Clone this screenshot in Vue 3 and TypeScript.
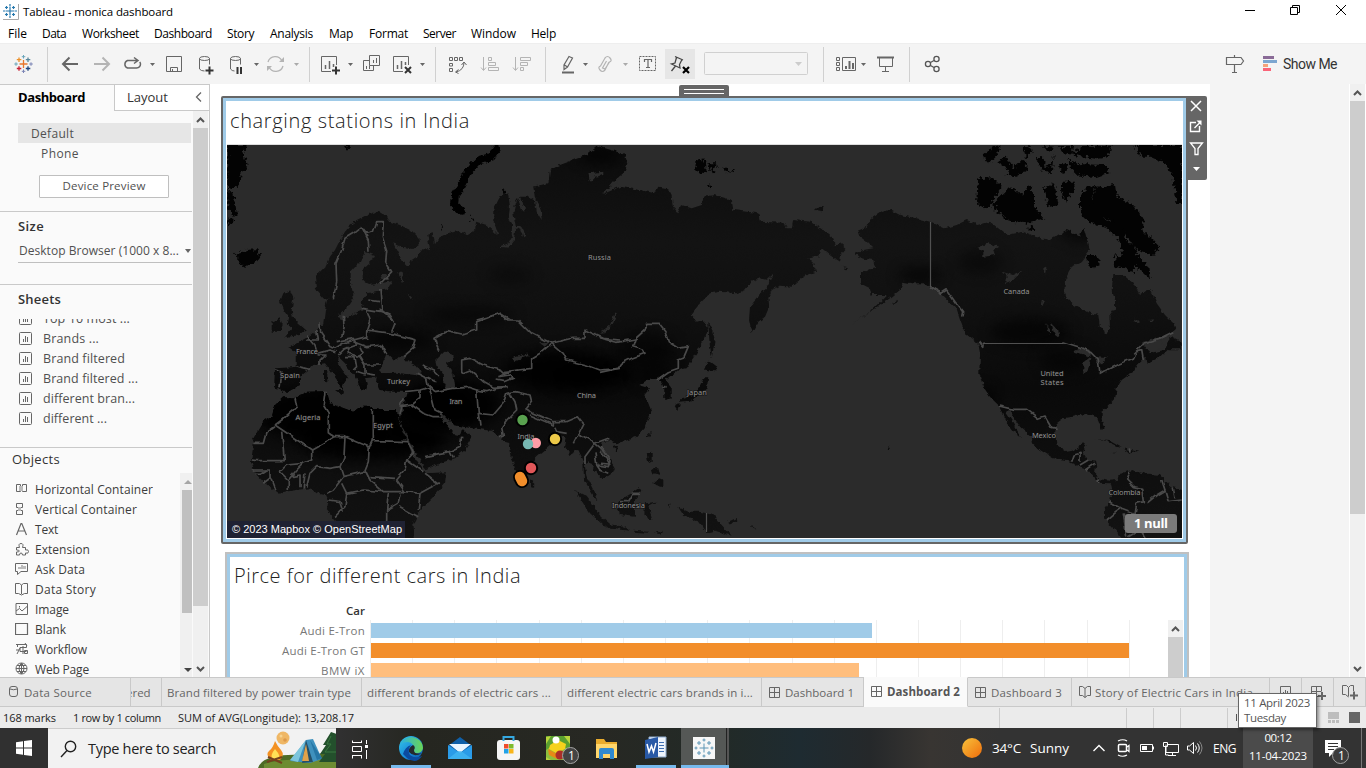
<script setup lang="ts">
import type { Directive } from 'vue'

// Tracks a label out (or in) so that it takes the given width.
const vFit: Directive<HTMLElement, number> = {
  mounted(el, { value }) {
    const width = el.getBoundingClientRect().width
    const count = (el.textContent ?? '').length
    if (count) el.style.letterSpacing = `${((value - width) / count).toFixed(3)}px`
  },
}

const menu: [string, number][] = [['File', 19], ['Data', 24], ['Worksheet', 57], ['Dashboard', 58], ['Story', 27], ['Analysis', 43], ['Map', 24], ['Format', 39], ['Server', 33], ['Window', 45], ['Help', 25]]
const sheets: [string, number][] = [['Top 10 most ...', 87], ['Brands ...', 56], ['Brand filtered', 82], ['Brand filtered ...', 95], ['different bran...', 92], ['different ...', 64]]
const objects: [string, number][] = [['Horizontal Container', 118], ['Vertical Container', 102], ['Text', 23], ['Extension', 55], ['Ask Data', 50], ['Data Story', 61], ['Image', 34], ['Blank', 31], ['Workflow', 52], ['Web Page', 54]]
const bars = [
  { car: 'Audi E-Tron', tw: 65, w: 501, color: '#a0cbe8' },
  { car: 'Audi E-Tron GT', tw: 83, w: 758, color: '#f28e2b' },
  { car: 'BMW iX', tw: 44, w: 488, color: '#ffbe7d' },
]
const gridLines = Array.from({ length: 19 }, (_, i) => Math.round(i * 42.15) + 0.5)

const project = (ox: number, oy: number) => (s: string) =>
  s.trim().split(/\s+/).map((p) => {
    const [x, y] = p.split(',').map(Number)
    return `${(ox + x / 3).toFixed(1)},${(oy + y / 3).toFixed(1)}`
  }).join(' ')
const nw = project(220, 80)
const sw = project(220, 310)
const pa = project(600, 140)
const am = project(850, 140)

const eurasia = [
  nw('330,655 315,660 288,630 285,590 315,560 330,530 345,510 365,470 385,440 410,420 440,405 470,395 500,405 510,425 540,435 570,450 595,475 597,495 580,507 545,500 520,490 530,510 545,540 560,555 570,555 575,540 590,530 610,505 630,510 622,465 638,460 645,490 655,475 680,460 720,452 740,465 765,450 768,425 800,435 835,465 820,420 820,390 835,360 848,338 865,345 870,380 866,410 876,435 875,470 865,490 840,500 865,503 882,480 885,450 900,445 910,475 916,470 910,445 900,438 887,438 880,400 885,370 895,355 905,388 915,388 900,350 925,350 945,362 950,395 965,420 962,390 945,355 940,320 985,310 990,270 1020,255 1060,240 1100,225 1130,200'),
  pa('0,20 50,35 75,45 82,70 75,95 40,125 10,162 60,140 120,150 165,160 175,140 205,145 215,165 218,200 232,220 245,195 275,205 305,195 310,170 345,165 395,180 400,210 440,215 475,220 480,245 550,248 560,265 575,265 580,240 630,245 670,270 700,295 705,320 720,310 738,325 720,345 718,362 690,345 665,325 655,350 625,355 640,370 648,395 610,410 575,440 540,437 515,450 505,475 508,500 495,530 475,545 455,580 447,540 450,500 475,470 500,440 523,400 500,420 480,415 455,425 435,450 410,460 360,455 330,460 300,490 272,525 290,545 310,540 325,565 310,600 290,640 260,685 235,690 215,705 195,720 215,745 215,775 193,780 193,745 180,720 150,715 118,735 150,745 133,765 145,790 155,815 135,860 110,890 70,905 50,910 25,900 5,905 0,935 30,960 43,980 35,1000 10,1018'),
  sw('1140,500 1125,480 1105,450 1095,470 1100,500 1115,530 1135,570 1125,565 1105,530 1092,510 1090,450 1075,420 1050,435 1035,410 1040,385 1020,375 1000,400 985,412 950,440 925,465 925,490 905,525 890,495 875,440 868,400 850,395 835,375 815,362 780,358 730,350 700,345 665,310 655,305 672,335 700,372 720,375 726,355 755,385 735,420 705,445 660,460 620,478 605,460 580,415 550,355 537,325 548,300 555,262 560,245 520,245 480,240 468,215 470,200 435,205 440,225 435,240 420,235 410,205 395,185 375,160 355,140 350,155 385,205 375,215 365,240 355,215 330,180 315,160 280,165 265,180 240,200 240,225 205,245 185,245 180,235 162,235 165,175 215,172 230,170 230,130 205,110 230,100 265,80 290,60 310,40 315,0 322,-30'),
].join(' ')
const africa = sw('155,320 165,285 190,262 225,262 260,245 320,243 330,280 360,290 400,305 420,290 445,290 480,300 530,300 535,325 550,365 562,395 575,430 600,465 615,490 680,487 675,520 640,560 600,600 580,640 585,690 360,690 355,640 340,625 320,600 325,575 315,555 290,550 270,535 230,540 175,548 135,520 105,490 93,455 98,420 97,390 130,335')
const america = am('25,270 50,260 65,235 95,215 120,210 150,225 200,235 240,245 285,265 320,255 350,240 385,255 420,245 445,265 470,285 520,275 555,290 600,300 620,285 650,270 690,290 700,260 720,330 690,370 665,380 645,420 643,465 670,495 710,515 745,525 750,565 770,580 780,555 778,530 795,505 795,480 785,450 790,405 820,405 850,430 870,465 900,445 920,490 945,525 970,550 978,570 940,590 900,600 870,620 905,607 900,640 945,630 960,590 995,608 995,628 955,628 935,648 890,672 885,650 860,675 850,695 815,720 800,745 795,775 770,800 755,815 755,835 766,860 755,870 740,830 700,822 670,830 640,835 620,850 615,880 620,915 650,935 680,930 690,912 708,910 700,935 715,962 740,965 735,1000 745,1018 780,1022 800,1020 815,1000 845,990 880,1000 930,1005 960,1040 1000,1050 1000,1200 820,1200 790,1165 762,1135 762,1110 780,1085 785,1050 780,1030 745,1028 725,1005 705,985 665,970 650,960 610,955 570,930 550,915 545,890 510,860 490,830 475,810 470,820 490,850 512,890 500,885 475,855 460,825 445,795 420,770 400,740 388,700 390,640 385,612 345,580 330,540 320,510 290,480 270,460 240,440 215,430 185,430 160,425 150,450 120,475 80,503 5,552 60,515 95,480 110,465 65,465 60,445 30,430 30,400 50,390 75,385 70,360 30,355 15,340 40,330 70,325 50,305 30,290')

const islands = [
  sw('190,0 180,-25 190,-50 210,-60 220,-35 215,0 218,20 235,40 258,60 240,75 195,82 215,55 200,40 205,20'),
  sw('155,35 180,25 188,45 180,65 155,65'),
  sw('930,508 943,518 942,533 930,530'),
  sw('1065,540 1100,560 1145,620 1180,650 1155,650 1110,610'),
  sw('312,180 322,180 322,218 312,210'),
  sw('345,240 370,240 365,255'),
  pa('312,692 325,660 352,680 335,695'),
  pa('310,715 325,715 320,745 270,785 240,788 245,775 280,765 300,740'),
  pa('222,795 240,790 232,810'),
  pa('325,545 333,560 345,600 335,655 328,600'),
  pa('140,890 152,875 148,895'), pa('140,940 155,935 155,965 145,970'),
  pa('160,1028 178,1015 190,1020 190,1042 165,1035'), pa('155,985 175,985 180,1005 160,1000'),
  pa('50,1095 60,1080 95,1060 115,1045 125,1050 105,1080 105,1130 60,1125'),
  pa('135,1090 172,1085 145,1100 158,1140 145,1140 133,1120'),
  pa('235,1102 265,1115 300,1115 340,1125 365,1155 395,1187 345,1172 320,1178 290,1140 250,1125'),
  pa('15,1150 70,1160 90,1172 20,1165'), pa('100,1172 145,1175 140,1181 100,1178'),
  pa('40,920 55,918 50,935'), pa('385,1145 410,1133 412,1142 390,1151'), pa('165,1178 190,1172 180,1182'), pa('205,1095 212,1090 208,1105'), pa('450,1155 470,1168 462,1168'),
  pa('862,918 870,925 864,930'), pa('645,210 655,200 675,202 665,214'), pa('725,380 745,385 740,388'),
  am('735,897 780,900 815,920 800,918 760,900'), am('820,925 865,935 840,940'),
  am('125,490 142,482 135,492'), am('785,938 800,938 795,941'),
]
const arctic = [
  nw('22,195 80,195 70,220 85,265 65,275 62,310 45,320 22,330'),
  nw('22,330 40,340 50,400 40,410 22,380'), nw('22,415 45,420 22,440'),
  nw('38,512 55,525 75,510 110,508 123,525 105,550 75,560 55,548 55,530'),
  nw('372,195 390,195 385,215'), nw('845,325 858,328 850,338'), nw('748,405 765,425 755,425'), nw('660,435 672,440 665,450'),
  pa('285,60 310,55 318,75 320,100 290,95'), pa('322,70 348,70 350,85 335,97'), pa('365,82 400,95 380,100'), pa('318,135 338,138 330,148'),
  am('385,115 430,112 458,140 435,170 425,195 405,208 378,185'),
  am('430,190 470,150 490,140 505,160 520,160 535,135 552,160 552,200 580,235 530,250 480,245 440,215'),
  am('400,50 420,25 455,17 440,45 415,70'), am('445,65 470,50 490,85 510,65 520,55 535,90 500,110 470,105 475,90'),
  am('520,25 530,60 545,30 535,18'), am('560,55 580,50 590,85 612,60 612,40 605,100 575,90'), am('575,18 615,20 600,35'),
  am('625,18 670,18 665,40 700,18 785,17 775,50 740,58 690,48 640,40'),
  am('655,55 680,72 770,75 775,100 740,112 680,105 660,85'),
  am('580,145 615,130 620,170 625,195 600,200 590,180'), am('635,125 675,125 670,155 645,185 637,165'),
  am('627,75 650,70 650,95 635,102'),
  am('690,165 715,140 735,138 725,180 735,200 760,215 760,235 780,245 800,235 820,260 825,290 835,310 850,310 860,340 885,370 895,380 900,420 880,400 855,375 850,400 820,385 790,380 800,360 790,345 815,350 815,320 800,290 770,265 735,255 700,235 690,205'),
  am('735,145 795,135 800,170 850,195 880,235 880,270 928,320 910,348 890,340 860,330 840,300 800,250 765,235 725,190'),
  am('855,15 997,15 997,195 980,195 970,110 945,70 900,50 870,50'),
  am('710,345 735,345 755,365 730,385 715,370'), am('545,255 555,270 530,268'),
]
const lakes = [
  nw('435,515 462,525 450,550 425,570 430,600 450,615 490,608 520,603 500,628 440,640 425,665 430,690 395,705 370,718 352,710 385,680 402,655 392,610 392,575 420,545'),
  nw('478,600 490,580 500,590 505,600'), nw('535,575 545,580 552,605 545,608'), nw('562,640 578,655 572,658'),
  sw('480,190 485,165 500,130 515,145 530,150 540,140 558,133 555,150 590,168 605,190 585,195 530,188'),
  sw('645,150 670,125 695,130 700,150 678,160 700,190 706,235 680,238 670,215 668,190 650,170'),
  sw('875,145 925,130 925,135 885,150'), sw('960,100 985,98 975,110'),
  nw('1105,280 1150,275 1150,285 1125,290 1110,305'), nw('1150,340 1195,300 1200,300 1160,330'),
  pa('45,515 50,520 40,550 15,577 0,578 30,555'),
  am('380,325 415,310 445,320 430,330 435,345 400,350 400,335'), am('455,395 490,405 517,393 490,420 465,430 470,410'),
  am('575,385 590,380 585,402'), am('575,480 582,485 572,505'), am('585,550 600,565 600,585'), am('602,545 625,570 628,592 612,580'),
  am('670,635 700,620 725,635 720,650 690,640'), am('700,670 725,650 712,695 700,700'), am('735,650 770,655 755,675 740,665'), am('745,698 780,685 770,692 750,703'),
  am('850,535 870,545 860,550'), am('895,540 910,538 905,545'), am('875,605 930,600 945,620 900,640'),
]

const borders = [
  nw('340,655 350,605 348,550 365,510 375,475 400,460 425,440 440,460 460,455 470,425 490,425 487,470 500,510 497,545 515,575 480,612'),
  nw('425,440 445,480 447,515'), nw('480,630 485,690 520,722'), nw('445,660 478,665'), nw('425,685 485,695'),
  nw('770,720 800,712 840,700 870,718'),
  sw('300,40 302,70 330,110 345,115 370,100 400,90 440,80'), sw('370,20 372,50 365,80'), sw('440,0 450,30 440,60 440,90'), sw('440,60 500,68 550,80 588,90 580,115 550,140'), sw('475,0 510,15 525,40 515,65'),
  sw('290,60 295,90 260,90'), sw('260,75 285,105 295,135 315,135 300,150 300,165'), sw('295,130 330,120 350,125'), sw('350,95 400,85 410,105 370,120 355,135'), sw('400,95 440,110 485,105 500,130'), sw('380,110 385,130 420,140 435,165 480,165'), sw('375,140 405,140 410,170 400,180'), sw('435,165 435,190 465,195'), sw('405,185 435,195'), sw('420,110 430,130 415,140'), sw('485,105 495,130'),
  sw('165,180 185,185 180,235'), sw('230,168 268,178'),
  sw('650,105 645,85 680,65 725,75 770,60 770,35 800,25 840,10 860,30 895,30 935,70 975,90 995,100 960,130 935,145 935,175 895,180 850,185 840,200'), sw('650,105 660,125'),
  sw('995,100 1030,130 1040,150 1100,165 1140,180 1200,175'), sw('995,100 1055,85 1095,85 1095,60 1150,85 1200,90'),
  sw('725,190 725,150 750,145 790,165 840,180 850,190 895,180'), sw('725,190 750,180 790,215 820,232 860,230'), sw('830,210 855,215 880,205 870,195 835,200'),
  sw('605,165 640,180 660,200'), sw('590,190 620,205 625,225 645,245'), sw('620,200 650,215'),
  sw('555,245 600,240 628,232 645,300 665,310'), sw('645,245 700,235 745,232 770,240 775,310 780,350'), sw('770,240 800,245 830,235 860,232'), sw('775,310 820,315 850,280 860,250 885,245 930,255 935,275 920,295'), sw('870,250 885,275 890,300 860,330 845,350 850,375 838,380'),
  sw('920,295 940,310 1000,335 1040,335 1075,320 1090,340 1075,370 1100,385 1125,400 1165,385'), sw('930,315 1000,345 1000,335'), sw('1005,350 1010,365 1040,370'), sw('1075,370 1060,400'), sw('1125,400 1110,420 1095,440 1095,460'), sw('1125,400 1150,420 1170,450 1165,470 1130,465 1125,430'), sw('1130,465 1140,480 1165,490'),
  sw('540,310 545,290 575,285 600,265 600,240'), sw('575,285 610,310 640,320 665,320'), sw('615,440 660,430 690,425 720,410 725,380'), sw('690,425 700,445'), sw('540,290 550,265'),
  sw('165,345 185,330 220,300 230,290 225,262'), sw('100,400 130,400 138,370 165,350'), sw('315,245 310,285 325,310 325,365 345,380 275,420 165,345'), sw('185,365 193,452 110,452 95,450'), sw('275,420 275,450 250,460 200,465 180,485'), sw('345,380 375,380 450,412'), sw('457,300 457,392 565,395'), sw('457,392 448,412 445,455 435,480 450,510 490,545 555,545'), sw('375,380 372,440 360,470 330,475 290,470 270,490 260,530'), sw('95,480 150,480 150,505 130,520'), sw('360,470 370,500 340,540 320,550'), sw('370,500 435,485'), sw('365,520 380,550 430,540 490,545'), sw('565,395 580,430 560,450 555,480 530,510 555,545 600,550 655,520 615,490'), sw('560,450 610,485'), sw('450,500 525,505'), sw('380,550 375,590 345,620'), sw('325,570 360,575 370,605'), sw('505,550 500,600 535,580 540,550'), sw('600,550 595,600'), sw('500,600 500,640 530,660'), sw('540,590 595,620'), sw('150,500 165,540'), sw('180,485 205,510 205,540'), sw('215,500 240,495 240,535'), sw('205,510 230,480 250,460'), sw('255,490 250,535'), sw('105,490 125,490 140,480'), sw('440,640 500,640'), sw('445,690 450,650'),
  pa('0,593 50,607 105,597 135,570 140,550 175,550 195,575 205,605 235,625 265,620 250,655 235,660 235,685 205,695 170,720'), pa('105,597 98,620 130,630 135,640 95,655 65,670 55,685 0,697'), pa('200,740 190,742'),
  pa('60,1085 85,1085 100,1060 120,1060'), pa('0,935 20,955 30,975'), pa('0,970 30,972'),
  am('240,440 275,460 290,450 315,485 338,515 335,530'), am('385,605 398,622 400,610'), am('637,605 690,622 720,635 745,660 750,700 800,675 850,655 860,635 875,632 880,660'), am('850,640 880,610 930,595 970,575'),
  am('447,798 490,808 530,808 565,835 585,828 605,862 620,865'), am('665,965 672,945 690,940 690,965'), am('690,975 715,960'), am('705,990 735,970'), am('745,1015 745,1028'),
  am('840,995 830,1020 850,1040 875,1045 880,1085 860,1090 855,1120'), am('780,1085 815,1105 855,1120 850,1150'), am('770,1140 800,1115 815,1105'), am('935,1020 945,1050 920,1065 890,1090'), am('945,1050 955,1085 995,1080'), am('970,1045 975,1075'), am('820,1120 830,1190'), am('835,1190 870,1170 885,1195'),
  am('838,925 840,938'),
]
const capeLine = nw('830,207 815,230 775,242 745,275 725,315 705,345 702,372 725,395')
// Desert and highland shading: centre, radii, opacity.
const blacks = [[330, 415, 72, 28, 0.9], [450, 405, 50, 24, 0.9], [372, 440, 75, 20, 0.9], [560, 370, 58, 20, 0.8], [590, 375, 45, 14, 0.8], [645, 350, 30, 18, 0.5], [1030, 332, 40, 14, 0.6], [980, 262, 22, 12, 0.4], [920, 275, 22, 7, 0.7], [400, 340, 35, 10, 0.6], [1065, 360, 25, 12, 0.5], [1140, 240, 30, 20, 0.7], [470, 315, 45, 8, 0.5], [510, 275, 22, 8, 0.35], [655, 375, 18, 12, 0.5], [600, 155, 22, 10, 0.6], [985, 400, 10, 12, 0.7], [430, 415, 30, 15, 0.8], [1085, 230, 24, 12, 0.6]]
const labels: [string, number, number, number][] = [['Russia', 599.5, 259.5, 23], ['France', 307, 354, 22], ['Spain', 290, 378, 20], ['Turkey', 398.5, 383.5, 23], ['Iran', 456, 404, 13], ['Algeria', 308, 420, 25], ['Egypt', 383, 428, 20], ['China', 586.5, 398, 19], ['India', 526, 438.5, 17], ['Japan', 697, 395, 20], ['Indonesia', 628.5, 508, 33], ['Canada', 1016.5, 293.5, 26], ['United', 1052, 376, 23], ['States', 1052, 384.5, 23], ['Mexico', 1044, 438, 24], ['Colombia', 1124.5, 495, 32]]
const marks = [[522.5, 420, '#59a14f'], [535.8, 443, '#ff9da7'], [528, 444, '#76b7b2'], [555, 439, '#edc948'], [531, 468, '#e15759']] as const
</script>

<template>
  <div class="window">
    <header class="titlebar">
      <svg class="app-mark" width="16" height="16" viewBox="0 0 16 16"><path d="M15.5 0v15.500H0" stroke="#aaa" fill="none" /><path d="M7 3v8M3 7h8M7 0v2.600M7 11.500v2.500M0 7h2.500M11.500 7H14M3.500 2v3M2 3.500h3M10.500 2v3M9 3.500h3M3.500 9v3M2 10.500h3M10.500 9v3M9 10.500h3" stroke="#2779ae" stroke-width="1.200" /></svg>
      <span v-fit="150" class="title">Tableau - monica dashboard</span>
      <svg class="controls" width="146" height="22" viewBox="1220 0 146 22" fill="none" stroke="#000"><path d="M1245 10.500h10M1290.500 7.500h7v7h-7zM1292.500 7V5.500h7v7H1298M1336 5l10 10M1346 5l-10 10" /></svg>
    </header>
    <nav class="menu"><span v-for="m in menu" :key="m[0]" v-fit="m[1]">{{ m[0] }}</span></nav>

    <div class="toolbar">
      <svg width="48" height="41" viewBox="0 43 48 41" fill="none" stroke-width="1.300">
        <path d="M23.500 60v8M19.500 64h8" stroke="#e8762c" /><path d="M19 57.500v4.500M16.800 59.700h4.500" stroke="#eb912c" /><path d="M28 57.500v4.500M25.800 59.700h4.500" stroke="#59879b" /><path d="M19 66.200v4.500M16.800 68.500h4.500" stroke="#c72035" /><path d="M28 66.200v4.500M25.800 68.500h4.500" stroke="#1f457e" />
        <path d="M23.500 55v3.500M21.800 56.700h3.500M16 62.300v3.500M14.300 64h3.500" stroke="#6ba5ba" stroke-width="1" /><path d="M31 62.300v3.500M29.300 64h3.500M23.500 69.500V73M21.800 71.300h3.500" stroke="#7b84b5" stroke-width="1" />
        <path d="M47.500 47v35" stroke="#d0d0d0" stroke-width="1" />
      </svg>
      <svg width="262" height="41" viewBox="48 43 262 41" fill="none" stroke="#666">
        <path d="M78 64H63M69.500 57.500L63 64l6.500 6.500" stroke-width="2" /><path d="M94 64h15M102.500 57.500L109 64l-6.500 6.500" stroke="#b4b4b4" stroke-width="2" />
        <path d="M130 60.500h-2.500a4 4 0 000 7.500h9q4-.500 4-4 0-1-.800-2" stroke-width="1.500" /><path d="M130 60.500h7M134 57.500l4 3-4 3" stroke-width="1.500" />
        <path d="M166.500 56.500h15v15h-15zM170.500 71.500v-4h7v4M172.500 69v2.500" />
        <path d="M199.500 58.500v10.500q1.500 2 5 2M209.500 58.500v6" /><ellipse cx="204.500" cy="58.500" rx="5" ry="2" /><path d="M209.500 66.500v8M205.500 70.500h8" stroke="#333" stroke-width="2" />
        <path d="M230.500 58.500v10.500q1.500 2 4 2M240.500 58.500v6" /><ellipse cx="235.500" cy="58.500" rx="5" ry="2" /><path d="M237.500 67v7M241 67v7" stroke="#333" stroke-width="2" />
        <path d="M268 62a7.500 7.500 0 0114-1M283 66a7.500 7.500 0 01-14 1" stroke="#b4b4b4" stroke-width="1.300" /><path d="M279 62h5v-5zM267 71v-5h5z" fill="#b4b4b4" stroke="none" />
        <g fill="#666" stroke="none"><path d="M150 63h5l-2.500 3zM254 63h5l-2.500 3z" /><path d="M294 63h5l-2.500 3z" fill="#aaa" /></g>
        <path d="M309.500 47v35" stroke="#d0d0d0" />
      </svg>
      <svg width="126" height="41" viewBox="310 43 126 41" fill="none" stroke="#666">
        <path d="M331 71.500h-9.500v-15h15V65" /><path d="M325.500 65v4M329.500 61v8M333.500 64v3" stroke-width="1.500" /><path d="M336 66.500v8M332 70.500h8" stroke="#333" stroke-width="2" />
        <path d="M369.500 55.500h10v10h-10zM369 60.500h-5.500v10h10V66M366.500 66v3M369.500 65.500V69M373.500 60v3M376.500 58v5" />
        <path d="M403 71.500h-9.500v-15h15V65" /><path d="M397.500 65v4M401.500 61v8M405.500 62v3" stroke-width="1.500" /><path d="M405 67l6 6M411 67l-6 6" stroke="#333" stroke-width="2" />
        <path d="M348 63h5l-2.500 3zM420 63h5l-2.500 3z" fill="#666" stroke="none" />
        <path d="M435.500 47v35" stroke="#d0d0d0" />
      </svg>
      <svg width="110" height="41" viewBox="436 43 110 41" fill="none" stroke="#666">
        <path d="M449.500 57.500h3v3h-3zM454.500 57.500h3v3h-3zM459.500 57.500h3v3h-3zM449.500 63.500h3v2.500h-3zM449.500 68.500h3v3h-3zM464 62.500q0 7.500-8 9.500M461.500 65l2.500-3 2.500 3M458.500 69.500l-3 2.500 3 1.500" />
        <g stroke="#b4b4b4"><path d="M483.500 57v13M481 67.500l2.500 3 2.500-3M488.500 57.500h3v3h-3zM488.500 62.500h7v3h-7zM488.500 67.500h10v3h-10z" /><path d="M515.500 57v13M513 67.500l2.500 3 2.500-3M520.500 57.500h10v3h-10zM520.500 62.500h7v3h-7zM520.500 67.500h3v3h-3z" /></g>
        <path d="M545.500 47v35" stroke="#d0d0d0" />
      </svg>
      <svg width="278" height="41" viewBox="546 43 278 41" fill="none" stroke="#666">
        <path d="M569 56.500l3.500 1.500-5 9-3.500 2.500V65zM564.500 65l3 2" stroke-width="1.200" /><path d="M562 72.500h12" stroke-width="2" />
        <path d="M609 62l-4 8q-2.500 3-5 0t.5-4l4.500-8q2.500-3 5 0t-.5 4l-4.500 7-2.500-1 4-7" stroke="#b4b4b4" stroke-width="1.200" />
        <path d="M639.500 56.500h16v14h-16z" stroke-dasharray="2 1" /><path d="M644.500 62v-2.500h7V62M648 59.500v8M646 67.500h4" stroke-width="1.200" />
        <path d="M665 49h30v30h-30z" fill="#e6e6e6" stroke="none" /><path d="M675 56.500l8 3.500M676.500 57.500l-1.500 5.500-3.500 1 8.500 4-.500-3.500 2.500-5M675.500 66l-4 5" stroke="#444" stroke-width="1.300" /><path d="M683 67l6 6M689 67l-6 6" stroke="#000" stroke-width="2.200" />
        <rect x="704.500" y="52.500" width="103" height="22" rx="1" stroke="#d0d0d0" /><path d="M795 62h7l-3.500 4z" fill="#ccc" stroke="none" />
        <path d="M583 63h5l-2.500 3z" fill="#666" stroke="none" /><path d="M623 63h5l-2.500 3z" fill="#aaa" stroke="none" />
        <path d="M823.500 47v35" stroke="#d0d0d0" />
      </svg>
      <svg width="86" height="41" viewBox="824 43 86 41" fill="none" stroke="#666">
        <path d="M842.500 57.500h13v13h-13zM836.500 57.500h3v3h-3zM836.500 62.500h3v3h-3zM836.500 67.500h3v3h-3z" /><path d="M846 66v3M849.500 61v8M853 63v6" stroke-width="2" />
        <path d="M879.500 58v8.500h13V58M885.500 66v5M882 71.500h7" /><path d="M877 57.500h17" stroke-width="2" />
        <path d="M861 63h5l-2.500 3z" fill="#666" stroke="none" /><path d="M909.500 47v35" stroke="#d0d0d0" />
      </svg>
      <svg width="40" height="41" viewBox="910 43 40 41" fill="none" stroke="#555" stroke-width="1.300"><circle cx="928" cy="64" r="2.600" /><circle cx="936.500" cy="59" r="2.600" /><circle cx="936.500" cy="69" r="2.600" /><path d="M930.500 62.500l3.500-2M930.500 65.500l3.500 2" /></svg>
      <svg class="sign" width="60" height="41" viewBox="1223 43 60 41" fill="none" stroke="#666"><path d="M1226.500 57.500h14.500l2.500 3.500-2.500 3.500h-14.500zM1234.500 55v2M1234.500 64.500v8M1232 72.500h5" stroke-width="1.200" /><g stroke="none"><path d="M1263 56h11v3h-11z" fill="#8a6b97" /><path d="M1263 60h14v3h-14z" fill="#7ca6d0" /><path d="M1263 64h5v3h-5z" fill="#f4a27a" /><path d="M1263 68h8v3h-8z" fill="#fa6478" /></g></svg>
      <span v-fit="54" class="showme">Show Me</span>
    </div>

    <main class="main">
      <aside class="side">
        <div class="side-tabs"><div class="side-tab on"><span v-fit="67">Dashboard</span></div><div class="side-tab off"><span v-fit="41">Layout</span><svg width="7" height="10" fill="none" stroke="#666" stroke-width="1.300"><path d="M6 .500L1.500 5 6 9.500" /></svg></div></div>
        <div class="side-body">
          <div class="side-content">
            <section class="devices">
              <div class="device picked"><span v-fit="43">Default</span></div>
              <div class="device sub"><span v-fit="38">Phone</span></div>
              <div class="preview"><span v-fit="83">Device Preview</span></div>
            </section>
            <section class="size"><h3><span v-fit="26">Size</span></h3><div class="select"><span v-fit="160">Desktop Browser (1000 x 8...</span><i class="caret"></i></div></section>
            <section class="sheets"><h3><span v-fit="43">Sheets</span></h3>
              <div class="sheet-list"><div v-for="s in sheets" :key="s[0]" class="sheet"><svg width="13" height="13" fill="none" stroke="#666"><rect x=".500" y=".500" width="12" height="12" rx="1" /><path d="M4.500 7v3M6.500 4v6M8.500 5v5" /></svg><span v-fit="s[1]">{{ s[0] }}</span></div></div>
            </section>
            <section class="objects"><h3><span v-fit="48">Objects</span></h3>
              <div class="object-body">
                <div class="object-list">
                  <div v-for="(o, i) in objects" :key="o[0]" class="object">
                    <svg width="14" height="14" fill="none" stroke="#666">
                      <template v-if="i === 0"><path d="M1.500 2.500h4v7h-4zM7.500 2.500h4v7h-4z" /><path d="M4 4h4v5H4z" fill="#bbb" stroke="none" /></template>
                      <template v-else-if="i === 1"><path d="M1.500 1.500h6v4h-6zM1.500 8.500h6v4h-6z" /><path d="M3 5h3v4H3z" fill="#bbb" stroke="none" /></template>
                      <path v-else-if="i === 2" d="M1.500 13L6 1.500h.800L11.500 13M3.300 9h6.500" stroke-width="1.200" />
                      <path v-else-if="i === 3" d="M1.500 5.500h3q-1.500-4 1.500-4t1.500 4h3v2.500q3-1 3 1.500t-3 1.500v2h-3q0-2-1.500-2t-1.500 2h-3V10q3 0 3-1t-3-1z" />
                      <g v-else-if="i === 4"><path d="M.500 1.500h12v8H6l-3.500 3v-3h-2z" /><path d="M3 7h8V4H8V3H6v2H3z" fill="#bbb" stroke="none" /></g>
                      <path v-else-if="i === 5" d="M.500 1.500h4L6.500 3l2-1.500h4v10h-3l-3 1.500-3-1.500h-3zM6.500 3v9" />
                      <path v-else-if="i === 6" d="M1 1.500h11.500v11H1zM1 9l3.500-2.500L7 9l5-4.500M4.500 4v1.500" />
                      <path v-else-if="i === 7" d="M.500 1.500h12v11h-12z" stroke-width="1.200" />
                      <path v-else-if="i === 8" d="M1 2.500h10.500v3H5v4h6.500M1 8h3M2.500 2v3M8 4v8M2 12l3-6M10 1l2 3M9.500 8.500h3v3h-3z" />
                      <path v-else d="M6.500 1a5.500 5.500 0 100 11 5.500 5.500 0 000-11zM1 6.500h11M6.500 1v11M6.500 1q-5 5.500 0 11M6.500 1q5 5.500 0 11M2 3.500h9M2 9.500h9" />
                    </svg>
                    <span v-fit="o[1]">{{ o[0] }}</span>
                  </div>
                </div>
                <div class="mini-scroll"><i class="tri up"></i><div class="mini-thumb"></div><i class="tri down"></i></div>
              </div>
            </section>
          </div>
          <div class="scroll"><svg class="chev" width="9" height="6"><path d="M1 5l3.500-3.500L8 5" /></svg><div class="thumb side-thumb"></div><svg class="chev end" width="9" height="6"><path d="M1 1l3.500 3.500L8 1" /></svg></div>
        </div>
      </aside>

      <div class="canvas">
        <div class="grab"></div>
        <div class="zone selected">
          <h2><span v-fit="240">charging stations in India</span></h2>
          <svg class="map" width="955" height="393" viewBox="227 145 955 393">
            <defs>
              <filter id="rough" x="-2%" y="-2%" width="104%" height="104%" color-interpolation-filters="sRGB"><feTurbulence type="fractalNoise" baseFrequency=".22" numOctaves="2" seed="4" /><feDisplacementMap in="SourceGraphic" scale="5" xChannelSelector="R" yChannelSelector="G" /></filter>
              <filter id="wavy" filterUnits="userSpaceOnUse" x="227" y="145" width="955" height="393" color-interpolation-filters="sRGB"><feTurbulence type="fractalNoise" baseFrequency=".13" numOctaves="1" seed="4" /><feDisplacementMap in="SourceGraphic" scale="5" xChannelSelector="R" yChannelSelector="G" /></filter>
              <filter id="veryrough" x="-2%" y="-2%" width="104%" height="104%" color-interpolation-filters="sRGB"><feTurbulence type="fractalNoise" baseFrequency=".28" numOctaves="2" seed="9" /><feDisplacementMap in="SourceGraphic" scale="8" xChannelSelector="R" yChannelSelector="G" /></filter>
              <filter id="soft" x="-50%" y="-80%" width="200%" height="260%"><feGaussianBlur stdDeviation="7" /></filter>
              <linearGradient id="land" gradientUnits="userSpaceOnUse" x1="0" y1="145" x2="0" y2="538"><stop offset="0" stop-color="#0c0c0c" /><stop offset=".25" stop-color="#131313" /><stop offset=".42" stop-color="#101010" /><stop offset=".62" stop-color="#0a0a0a" /><stop offset="1" stop-color="#121212" /></linearGradient>
              <clipPath id="land-clip"><polygon :points="eurasia" /><polygon :points="africa" /><polygon :points="america" /></clipPath>
            </defs>
            <rect x="227" y="145" width="955" height="393" fill="#2b2b2b" />
            <g filter="url(#rough)">
              <g fill="url(#land)"><polygon :points="eurasia" /><polygon :points="africa" /><polygon :points="america" /><polygon v-for="(p, i) in islands" :key="i" :points="p" /></g>
              <g clip-path="url(#land-clip)"><ellipse v-for="(b, i) in blacks" :key="i" :cx="b[0]" :cy="b[1]" :rx="b[2]" :ry="b[3]" fill="#000" :opacity="b[4]" filter="url(#soft)" /></g>
              <polyline :points="capeLine" fill="none" stroke="#000" stroke-width="8" stroke-linejoin="round" stroke-linecap="round" />
            </g>
            <g fill="#030303" filter="url(#veryrough)"><polygon v-for="(p, i) in arctic" :key="i" :points="p" /></g>
            <g fill="#2b2b2b" filter="url(#rough)"><polygon v-for="(p, i) in lakes" :key="i" :points="p" /></g>
            <g fill="none" stroke="#4a4a4a" stroke-width="1.700" stroke-linejoin="round" filter="url(#wavy)"><polyline v-for="(p, i) in borders" :key="i" :points="p" /></g>
            <path d="M930.500 222v65M983 343.500h80M706.500 513v19" fill="none" stroke="#505050" stroke-width="1.200" />
            <g class="label" text-anchor="middle"><text v-for="l in labels" :key="l[0]" :x="l[1]" :y="l[2]" :textLength="l[3]">{{ l[0] }}</text></g>
            <circle v-for="m in marks" :key="m[0]" :cx="m[0]" :cy="m[1]" :r="m[2] === '#ff9da7' || m[2] === '#76b7b2' ? 5.2 : 6.200" :fill="m[2]" stroke-width="2" :stroke="m[2] === '#ff9da7' || m[2] === '#76b7b2' ? 'none' : '#000'" />
            <path d="M520 477l2 4" stroke="#000" stroke-width="14" stroke-linecap="round" /><path d="M520 477l2 4" stroke="#f28e2b" stroke-width="10.500" stroke-linecap="round" />
            <rect x="227" y="521" width="178" height="17" fill="#1f2233" /><text class="credit" x="232" y="533" textLength="170">© 2023 Mapbox © OpenStreetMap</text>
            <rect x="1125" y="514" width="52" height="19" rx="3" fill="#7a7a7a" /><text class="nulls" x="1134" y="528" textLength="34">1 null</text>
          </svg>
          <svg class="zone-tools" width="21" height="84" viewBox="1186 96 21 84" fill="none" stroke="#fff"><path d="M1186 96h19q2 0 2 2v80q0 2-2 2h-19z" fill="#666" stroke="none" /><path d="M1191 101l10 10M1201 101l-10 10" stroke-width="1.500" /><path d="M1196 122.500h-5.500v9h9V126M1194.500 128l6-6" stroke-width="1.400" /><path d="M1196.500 120.500h5v5z" fill="#fff" stroke="none" /><path d="M1190.500 143h12l-4.500 5.500v6h-3v-6z" stroke-width="1.300" /><path d="M1193 167h7l-3.500 4z" fill="#fff" stroke="none" /></svg>
        </div>
        <div class="zone plain">
          <h2><span v-fit="287">Pirce for different cars in India</span></h2>
          <div class="chart">
            <div class="cars"><b><span v-fit="19">Car</span></b><div v-for="b in bars" :key="b.car" class="car"><span v-fit="b.tw">{{ b.car }}</span></div></div>
            <svg class="plot" width="800" height="57"><path v-for="g in gridLines" :key="g" :d="`M${g} 0v57`" stroke="#eee" /><rect v-for="(b, i) in bars" :key="b.car" x="1" :y="3 + i * 20" :width="b.w" height="15" :fill="b.color" /></svg>
            <div class="scroll chart-scroll"><svg class="chev" width="9" height="6"><path d="M1 5l3.500-3.500L8 5" /></svg><div class="thumb fill"></div></div>
          </div>
        </div>
      </div>
      <div class="gutter"></div>
      <div class="scroll page-scroll"><svg class="chev" width="9" height="6"><path d="M1 5l3.500-3.500L8 5" /></svg><div class="thumb page-thumb"></div><svg class="chev end" width="9" height="6"><path d="M1 1l3.500 3.500L8 1" /></svg></div>
    </main>

    <div class="tabs">
      <div class="tab source"><svg width="9" height="12" fill="none" stroke="#666"><rect x=".500" y=".500" width="8" height="10" rx="2.500" /><path d="M1 3q3.500 1.500 7 0" /></svg><span v-fit="68">Data Source</span></div>
      <div class="tab cut"><span>ered</span></div>
      <div class="tab sheet-tab"><span v-fit="184">Brand filtered by power train type</span></div>
      <div class="tab sheet-tab"><span v-fit="184">different brands of electric cars ...</span></div>
      <div class="tab sheet-tab"><span v-fit="186">different electric cars brands in i...</span></div>
      <div class="tab d1"><svg width="11" height="11" fill="none" stroke="#666"><path d="M.500.500h10v10H.500zM5.500.500v10M.500 5.500h10" /></svg><span v-fit="69">Dashboard 1</span></div>
      <div class="tab dash on"><svg width="11" height="11" fill="none" stroke="#666"><path d="M.500.500h10v10H.500zM5.500.500v10M.500 5.500h10" /></svg><span v-fit="73">Dashboard 2</span></div>
      <div class="tab dash"><svg width="11" height="11" fill="none" stroke="#666"><path d="M.500.500h10v10H.500zM5.500.500v10M.500 5.500h10" /></svg><span v-fit="71">Dashboard 3</span></div>
      <div class="tab story"><svg width="12" height="12" fill="none" stroke="#666"><path d="M.500.500h3l2.500 2 2.500-2h3v9h-3L6 11.500l-2.500-2h-3zM6 2.500v9" /></svg><span v-fit="158">Story of Electric Cars in India</span></div>
      <div class="tab new"><svg width="16" height="16" fill="none" stroke="#666"><path d="M2.500 2.500h10v10h-10zM5.500 8v2M7.500 6v4M9.500 7v3" /></svg></div>
      <div class="tab new"><svg width="16" height="16" fill="none" stroke="#666"><path d="M11.500 7V2.500h-10v10H8M6.500 2.500v10M1.500 7.500h10" /><path d="M12 8v8M8 12h8" stroke-width="2" /></svg></div>
      <div class="tab new"><svg width="16" height="16" fill="none" stroke="#666"><path d="M11.500 7V1.500h-3l-2 2-2-2h-4v9h3l3 2.500M6.500 3.500v9" /><path d="M12 7.500v8M8 11.500h8" stroke-width="2" /></svg></div>
    </div>

    <div class="status"><span v-fit="53">168 marks</span><span v-fit="88">1 row by 1 column</span><span v-fit="176">SUM of AVG(Longitude): 13,208.17</span>
      <svg class="status-right" width="367" height="21" viewBox="999 707 367 21"><path d="M999.500 708v20M1126.500 708v20M1153.500 708v20M1180.500 708v20M1227.500 708v20" stroke="#ccc" /><path d="M1236.500 714v7" stroke="#555" /><path d="M1328 712h11v7h-11zM1328 720h3v3h-3zM1332 720h3v3h-3zM1336 720h3v3h-3z" fill="#bdbdbd" /><path d="M1349 712h11v11h-11z" fill="#666" /></svg>
    </div>

    <footer class="taskbar">
      <svg width="48" height="40" viewBox="0 728 48 40"><path d="M16 742.300l7-1v6.200h-7zM24 741.100l8-1.200v7.600h-8zM16 748.500h7v6.200l-7-1zM24 748.500h8v7.600l-8-1.200z" fill="#fff" /></svg>
      <div class="search">
        <svg width="40" height="40" viewBox="48 728 40 40" fill="none" stroke="#222" stroke-width="1.400"><circle cx="70.500" cy="745.500" r="5.200" /><path d="M67 749.500l-6 6.500" /></svg>
        <span v-fit="128">Type here to search</span>
        <svg class="camp" width="78" height="39" viewBox="258 729 78 39"><path d="M258 768q4-12 30-13t48-2v15z" fill="#4d6b25" /><path d="M264 764q20-7 72-3v7h-72z" fill="#7a9a38" opacity=".7" /><circle cx="283" cy="738" r="6.500" fill="#efb765" /><circle cx="281" cy="736" r="1.500" fill="#f7d38f" /><circle cx="285" cy="740" r="1.800" fill="#dc994c" />
          <path d="M290 761l16-21 7-1 9 20-12 4z" fill="#3f91bd" /><path d="M306 740l-8 22-8-2z" fill="#7cc5dc" /><path d="M306 740l7 22-11 1z" fill="#244f68" /><path d="M306 744l-4 17h7z" fill="#e0a24b" /><path d="M310 740l12 18-5 2z" fill="#2676a5" />
          <path d="M331 732l-8 13h3l-6 9h5l-6 8h18v-28z" fill="#23502c" /><path d="M331 736l-4 8h4l-6 8h11" fill="none" stroke="#3a7940" />
          <path d="M275 741q-2 7-6 10t2 9h9q5-5 1-10-3-3-6-9z" fill="#f39122" /><path d="M275 749q-6 7-2 11h5q4-3-3-11z" fill="#ffe056" /><path d="M267 762l15-5M268 757l14 6" stroke="#75401d" stroke-width="2" /></svg>
      </div>
      <svg class="apps" width="410" height="40" viewBox="336 728 410 40">
        <defs><linearGradient id="edge" x1="0" y1="0" x2="1" y2="1"><stop offset="0" stop-color="#36c8e9" /><stop offset=".6" stop-color="#1686d8" /><stop offset="1" stop-color="#0c4fa0" /></linearGradient><linearGradient id="edge2"><stop offset="0" stop-color="#28afe8" /><stop offset="1" stop-color="#6bd653" /></linearGradient></defs>
        <path d="M352.500 742.500v-2M361.500 742.500v-2M352 742.500h10M352.500 746.500h9v5h-9zM352 755.500h10M352.500 756v2.500M361.500 756v2.500M366.500 740v4M366.500 750v9" stroke="#fff" fill="none" /><path d="M365 745h3v3h-3z" fill="#fff" />
        <path d="M681 728h45v40h-45z" fill="#555856" /><path d="M726 728h1v40h-1z" fill="#222" /><path d="M727 728h2v40h-2z" fill="#555" />
        <circle cx="411" cy="748" r="12" fill="url(#edge)" /><path d="M399.500 745a12 11 0 0123.500 3q-1 6-8 5-3-1-1-4 0-6-6-7-5 0-8.500 3z" fill="url(#edge2)" /><path d="M403 754q2-7 8-9-4 5-1 10 5 4 12 1-6 9-15 2z" fill="#0b4ba0" /><path d="M413 745q3 2 1 5 0 5 8 3-8 5-13-1-1-4 4-7z" fill="#25292d" />
        <path d="M448 746l12-9 12 9v13h-24z" fill="#1060a8" /><path d="M449 744h22l-11 9z" fill="#eaf6ff" /><path d="M448 745l12 8 12-8v14h-24z" fill="#2a9be8" /><path d="M448 759l10-8h3l11 8z" fill="#45b9f4" opacity=".7" />
        <rect x="497" y="740" width="23" height="20" rx="3" fill="#f5f5f5" /><path d="M503.500 741v-4h10v4" stroke="#35a9e2" fill="none" stroke-width="2" /><path d="M504 744h4.500v4.500H504z" fill="#ef4c2b" /><path d="M509 744h4.500v4.500H509z" fill="#7dba2c" /><path d="M504 749h4.500v4.500H504z" fill="#20a2e8" /><path d="M509 749h4.500v4.500H509z" fill="#f9b61b" />
        <path d="M546 736h24v24h-24z" fill="#5a9f2f" /><path d="M546 750l10-7 14 7v10h-24z" fill="#8dbf3e" /><path d="M550 745l8-5 8 4-1 5-9 4-7-4z" fill="#f5d21d" /><path d="M548 749l9 5 10-5-1 5-9 5-8-4z" fill="#e68a17" /><circle cx="556" cy="740" r="3.500" fill="#fff" /><path d="M546 737l5-1-5 8zM570 736v8l-6-8zM546 757l5 3h-5z" fill="#b8d43c" /><circle cx="560" cy="755" r="4.500" fill="#ab2f28" /><circle cx="570.500" cy="755.500" r="8" fill="#444" stroke="#a6a6a6" /><text x="568" y="760" class="badge">1</text>
        <path d="M596 739h8l2 3h11v16h-21z" fill="#e9ac2e" /><path d="M596 744h21v14h-21z" fill="#ffd66b" /><path d="M599 750q0-2 2-2h11q2 0 2 2v9h-4v-5h-7v5h-4z" fill="#3089cf" />
        <path d="M649 737h17v20h-17z" fill="#eef4fc" stroke="#8facce" /><path d="M645 740l13-3v20l-13 2z" fill="#2859a6" /><path d="M647 744l2 8 2.500-6 2 6 2.500-9" fill="none" stroke="#fff" stroke-width="1.500" /><path d="M659 742.500h5M659 745.500h5M659 748.500h5M659 751.500h5" stroke="#3e6fb3" />
        <path d="M693 737h22v22h-22z" fill="#f7f7f7" /><path d="M704 743.500v9M699.500 748h9M704 738.500v3M702.500 740h3M704 754.500v3M702.500 756h3M694.500 748h3M696 746.500v3M710.500 748h3M712 746.500v3M699 741v4M697 743h4M709 741v4M707 743h4M699 751v4M697 753h4M709 751v4M707 753h4" stroke="#5d95b5" />
        <path d="M391 765h40v3h-40zM636 765h40v3h-40zM681 765h48v3h-48z" fill="#76b9ed" />
      </svg>
      <svg class="sun" width="22" height="22"><defs><linearGradient id="sun" x1="0" y1="0" x2="1" y2="1"><stop offset="0" stop-color="#f7c33c" /><stop offset="1" stop-color="#ef6c0b" /></linearGradient></defs><circle cx="11" cy="11" r="10" fill="url(#sun)" /></svg>
      <span v-fit="29" class="temp">34°C</span><span v-fit="39" class="sky">Sunny</span>
      <svg class="tray" width="125" height="40" viewBox="1085 728 125 40" fill="none" stroke="#fff"><path d="M1093.500 751l5.500-5.500 5.500 5.500" stroke-width="1.400" /><rect x="1118.500" y="744.500" width="8" height="7" rx="1" stroke-width="1.500" /><path d="M1127 747l2-1.500v6l-2-1.500M1118 741q5-2.500 9 0M1118 755q5 2.500 9 0" stroke-width="1.200" /><path d="M1140.500 744.500h12v7h-12zM1153.500 746.500v3" /><path d="M1142 746h5v4h-5z" fill="#fff" stroke="none" /><path d="M1166 744.500V752.500h12.500v-8H1168M1172.500 753v2.500M1168 755.500h8M1163.500 742.500h4v4h-4zM1165.500 747v8h3" /><path d="M1187.500 746h2l4-3.500v11l-4-3.500h-2zM1195.500 745.500q2 2.500 0 5M1197.500 743.500q3.500 4.500 0 9" /><path d="M1199.500 741.500q5 6.500 0 13" stroke="#888" /></svg>
      <span v-fit="23" class="lang">ENG</span>
      <div class="clock"><span v-fit="27">00:12</span><span v-fit="58">11-04-2023</span></div>
      <svg class="note" width="53" height="40" viewBox="1313 728 53 40"><path d="M1325 740h16v13h-8l-4 4v-4h-4z" fill="#fff" /><path d="M1328 743.500h10M1328 746.500h10M1328 749.500h6" stroke="#333" /><circle cx="1340.500" cy="755.500" r="8" fill="#3c3c3c" stroke="#a0a0a0" /><text x="1338" y="760" class="badge">1</text><path d="M1361.500 728v40" stroke="#777" /></svg>
    </footer>
    <div class="tip"><span v-fit="66">11 April 2023</span><span v-fit="42">Tuesday</span></div>
  </div>
</template>

<style>
html, body { margin: 0; overflow: hidden; background: #fff; }
</style>
<style scoped>
* { box-sizing: border-box; }
.window { position: relative; width: 1366px; height: 768px; display: flex; flex-direction: column; overflow: hidden; font-family: "Open Sans", "Noto Sans", sans-serif; color: #505050; font-size: 12px; white-space: nowrap; background: #fff; }
svg { display: block; flex: none; }
span { flex: none; }
.titlebar { height: 22px; display: flex; align-items: center; color: #000; padding-left: 3px; font-size: 11.500px; }
.app-mark { margin-right: 4px; margin-top: 1px; }
.controls { margin-left: auto; }
.menu { height: 21px; display: grid; align-items: center; grid-template-columns: 34px 40px 72px 73px 43px 59px 40px 54px 48px 60px 30px; padding: 2px 0 0 8px; color: #000; font-size: 12px; }
.menu span { justify-self: start; line-height: 19px; }
.toolbar { height: 41px; display: flex; background: #f4f4f4; border-top: 1px solid #eee; align-items: center; }
.toolbar svg { height: 41px; margin-top: -1px; }
.sign { margin-left: 273px; }
.showme { font: 14px Roboto, sans-serif; color: #333; margin-top: -1px; }
.main { height: 593px; display: flex; }
.side { width: 210px; background: #fafafa; border-right: 1px solid #c9c9c9; border-top: 1px solid #c9c9c9; display: flex; flex-direction: column; }
.side-tabs { height: 26px; display: flex; }
.side-tab { display: flex; align-items: center; }
.side-tab.on { width: 114px; padding: 0 0 2px 18px; font-size: 13px; font-weight: 700; color: #000; }
.side-tab.off { flex: 1; border-left: 1px solid #c9c9c9; border-bottom: 1px solid #c9c9c9; background: #fff; padding: 0 7px 1px 12px; justify-content: space-between; font-size: 13px; color: #333; }
.side-body { flex: 1; min-height: 0; display: flex; }
.side-content { width: 192px; margin-right: 1px; display: flex; flex-direction: column; }
.devices { height: 101px; padding: 12px 1px 0 18px; border-bottom: 1px solid #c9c9c9; }
.device { height: 20px; line-height: 21px; padding-left: 13px; }
.picked { background: #e6e6e6; }
.sub { padding-left: 23px; }
.preview { width: 130px; height: 23px; margin: 12px 0 0 21px; border: 1px solid #bfbfbf; background: #fff; border-radius: 1px; display: flex; justify-content: center; align-items: center; font-size: 11.500px; padding-bottom: 2px; }
h3 { margin: 0; font-size: 13px; font-weight: 600; color: #333; line-height: 20px; }
.size { height: 73px; padding: 4px 1px 0 18px; border-bottom: 1px solid #c9c9c9; }
.select { margin-top: 4px; height: 23px; border-bottom: 1px solid #bfbfbf; display: flex; align-items: center; justify-content: space-between; padding: 0 0 1px 1px; }
.caret { border: 3.500px solid transparent; border-top: 4px solid #666; border-bottom: 0; }
.sheets { height: 163px; padding: 4px 1px 0 18px; border-bottom: 1px solid #c9c9c9; }
.sheet-list { margin-top: 10px; height: 110px; overflow: hidden; display: flex; flex-direction: column; }
.sheet { height: 20px; flex: none; display: flex; align-items: center; gap: 11px; padding-left: 1px; font-size: 12.500px; }
.sheet:first-child { margin-top: -11px; }
.objects { flex: 1; min-height: 0; display: flex; flex-direction: column; }
.objects h3 { padding: 1px 0 0 12px; font-weight: 500; }
.object-body { margin-top: 4px; flex: 1; min-height: 0; display: flex; justify-content: space-between; }
.object-list { padding-top: 6px; height: 204px; overflow: hidden; }
.object { height: 20px; display: flex; align-items: center; gap: 6px; padding-left: 15px; font-size: 12px; color: #3c3c3c; }
.mini-scroll { width: 12px; background: #f0f0f0; display: flex; flex-direction: column; align-items: center; padding: 7px 0 5px; }
.tri { border: 4px solid transparent; margin-left: 4px; }
.tri.up { border-bottom-color: #a5a5a5; border-top: 0; }
.tri.down { border-top-color: #444; border-bottom: 0; margin-top: auto; }
.mini-thumb { width: 10px; height: 123px; margin: 6px 0 0 2px; background: #c0c0c0; flex: none; }
.scroll { width: 15px; background: #f0f0f0; display: flex; flex-direction: column; align-items: center; }
.chev { margin: 6px 0 5px; fill: none; stroke: #555; stroke-width: 2; }
.chev.end { margin-top: auto; }
.thumb { width: 15px; background: #cdcdcd; flex: none; }
.side-thumb { height: 478px; }
.canvas { width: 1000px; background: #fff; position: relative; padding: 12px 0 0 11px; overflow: hidden; }
.grab { position: absolute; left: 469px; top: 1px; width: 50px; height: 12px; border-radius: 2px 2px 0 0; border: solid #666; border-width: 4px 5px 3px; background: linear-gradient(#fff 1px, #666 1px 4px, #fff 4px); }
.zone { display: flex; flex-direction: column; background: #fff; }
.zone h2 { margin: 0; font-size: 20px; font-weight: 300; color: #222; }
.selected { position: relative; width: 967px; height: 448px; border: 2px solid #666; border-radius: 2px; box-shadow: inset 0 0 0 3px #a0cbe8; padding: 3px 4px; }
.selected h2 { height: 44px; border-bottom: 1px solid #ddd; line-height: 39px; padding-left: 3px; }
.zone-tools { position: absolute; left: 963px; top: -2px; }
.label { font: 7.500px "Noto Sans", sans-serif; fill: #919191; stroke: #111; stroke-width: 1.200px; paint-order: stroke; }
.credit { font: 11px "Liberation Sans", Arial, sans-serif; fill: #fff; }
.nulls { font: 700 13px "Open Sans", sans-serif; fill: #fff; }
.plain { width: 964px; height: 200px; margin: 8px 0 0 4px; border: 2px solid #c0c0c0; box-shadow: inset 0 0 0 3px #a0cbe8; padding: 3px; }
.plain h2 { height: 47px; line-height: 38px; padding-left: 4px; }
.chart { display: flex; align-items: flex-start; padding-top: 16px; }
.cars { width: 135px; margin-top: -19px; text-align: right; font-size: 11.500px; line-height: 20px; color: #777; }
.cars b { display: block; font-weight: 600; color: #333; }
.plot { margin-left: 5px; }
.chart-scroll { margin-left: -2px; height: 60px; }
.thumb.fill { height: 50px; }
.gutter { width: 139px; background: #f4f4f4; margin-right: 1px; }
.page-scroll { width: 16px; border-right: 1px solid #fff; }
.page-thumb { height: 413px; }
.tabs { height: 30px; display: flex; background: #e5e5e5; color: #666; font-size: 11.500px; }
.tab { height: 30px; display: flex; align-items: center; gap: 5px; border: solid #c9c9c9; border-width: 1px 1px 1px 0; padding-left: 5px; overflow: hidden; }
.source { width: 131px; padding-left: 9px; gap: 6px; }
.cut { width: 31px; padding: 0; }
.cut span { margin-left: -5px; }
.sheet-tab { width: 200px; }
.d1 { width: 102px; padding-left: 7px; }
.dash { width: 104px; padding-left: 7px; }
.tab.on { background: #fafafa; border-top-color: #fafafa; border-bottom-color: #fafafa; font-weight: 700; color: #555; padding: 0 0 2px 7px; }
.story { width: 198px; padding-left: 7px; gap: 4px; }
.new { width: 32px; padding-left: 8px; }
.status { height: 21px; background: #ebebeb; display: flex; align-items: center; color: #222; font-size: 11px; padding-left: 3px; }
.status span + span { margin-left: 17px; }
.status .status-right { margin-left: auto; }
.taskbar { height: 40px; display: flex; align-items: center; color: #fff; background: linear-gradient(90deg, #303030 0 340px, #252620 420px, #272823 600px, #222a27 720px, #1e2b31 800px, #25282a 870px, #383532 930px, #333 1000px); }
.search { width: 288px; height: 40px; background: #f2f2f2; border-top: 1px solid #ccc; display: flex; align-items: center; color: #222; font-size: 14.500px; }
.camp { margin-left: auto; }
.sun { margin-left: 215px; }
.temp, .sky { font-size: 13.500px; }
.temp { margin-left: 9px; }
.sky { margin-left: 9px; }
.tray { margin-left: 16px; }
.lang { margin-left: 3px; font-size: 12px; }
.clock { margin-left: 7px; width: 70px; height: 40px; background: #4b4b4b; display: flex; flex-direction: column; align-items: center; font-size: 11.500px; line-height: 18px; padding-top: 1px; }
.badge { font: 12px "Open Sans", sans-serif; fill: #fff; }
.tip { position: absolute; left: 1238px; top: 693px; width: 79px; height: 35px; background: #fff; border: 1px solid #666; box-shadow: 2px 2px 3px #0006; display: flex; flex-direction: column; align-items: flex-start; padding: 1px 0 0 5px; font-size: 11.500px; line-height: 15px; color: #555; }
</style>
